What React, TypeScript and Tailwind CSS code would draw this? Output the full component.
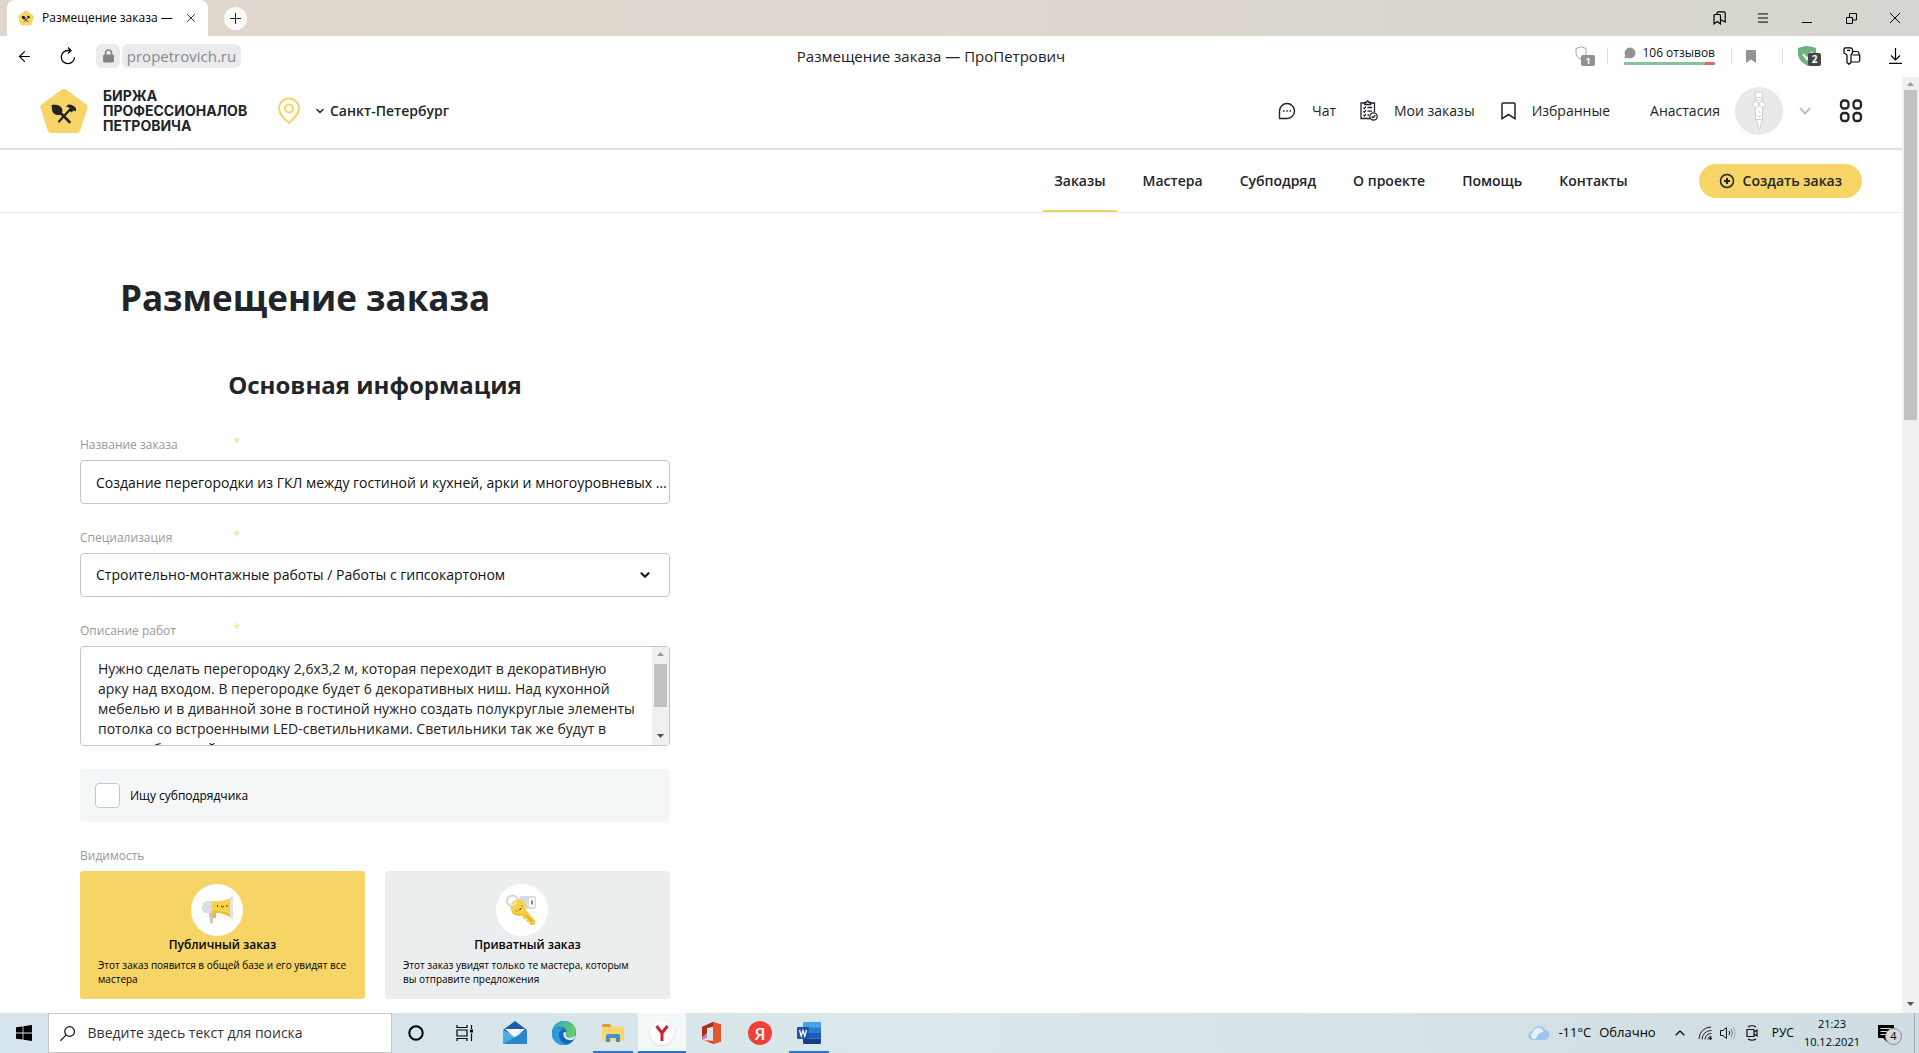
import { useState } from "react";
import type { ReactNode } from "react";
import { ArrowLeft, ChevronDown, ChevronUp, Menu, MessageCircle, X } from "lucide-react";

const NAV_ITEMS = ["Заказы", "Мастера", "Субподряд", "О проекте", "Помощь", "Контакты"];

const SPECIALIZATIONS = ["Строительно-монтажные работы / Работы с гипсокартоном"];

const DESCRIPTION =
  "Нужно сделать перегородку 2,6х3,2 м, которая переходит в декоративную арку над входом. В перегородке будет 6 декоративных ниш. Над кухонной мебелью и в диванной зоне в гостиной нужно создать полукруглые элементы потолка со встроенными LED-светильниками. Светильники так же будут в проеме большой комнаты.";

export default function App() {
  return (
    <div className="flex h-screen flex-col overflow-hidden bg-white font-['Open_Sans','Noto_Sans',sans-serif] text-[#212529]">
      <TitleBar />
      <Toolbar />
      <div className="flex min-h-0 flex-1">
        <div className="min-w-0 flex-1 overflow-hidden">
          <SiteHeader />
          <SiteNav />
          <OrderForm />
        </div>
        <ScrollBar thumbClass="mt-1 h-[330px]" />
      </div>
      <Taskbar />
    </div>
  );
}

function TitleBar() {
  return (
    <div className="flex h-9 shrink-0 items-center bg-linear-to-r from-[#e0d6cc] via-[#dfd7d0] to-[#d5d6cf] pr-0.5">
      <div className="ml-[7px] flex h-full w-[201px] items-center rounded-t-lg bg-white pr-2.5 pl-[11px]">
        <LogoMark className="h-4 w-4" />
        <span className="ml-2 flex-1 overflow-hidden text-xs whitespace-nowrap text-black">Размещение заказа —</span>
        <button aria-label="Закрыть вкладку">
          <X size={14} strokeWidth={1.7} className="text-[#333]" />
        </button>
      </div>
      <button
        aria-label="Новая вкладка"
        className="ml-4 flex h-[23px] w-[23px] items-center justify-center rounded-full bg-[#faf9f7]"
      >
        <svg width="11" height="11" viewBox="0 0 11 11" stroke="#222" fill="none">
          <path d="M5.5 0v11M0 5.5h11" />
        </svg>
      </button>
      <div className="ml-auto flex h-full text-black">
        <WindowButton label="Закладки">
          <svg width="13" height="14" viewBox="0 0 13 14" fill="none" stroke="currentColor" strokeWidth="1.2">
            <path d="M1 4.5a1 1 0 0 1 1-1h4.500a1 1 0 0 1 1 1v8.500L4.300 10.500 1 13z" />
            <path d="M4 3.200V2a1.200 1.200 0 0 1 1.200-1.200H11A1.200 1.200 0 0 1 12.200 2v9L8 8.700" />
          </svg>
        </WindowButton>
        <WindowButton label="Меню">
          <Menu size={14} strokeWidth={1.7} />
        </WindowButton>
        <WindowButton label="Свернуть">
          <svg width="10" height="10" viewBox="0 0 10 10" stroke="currentColor">
            <path d="M0 9.500h10" />
          </svg>
        </WindowButton>
        <WindowButton label="Развернуть">
          <svg width="11" height="11" viewBox="0 0 11 11" fill="none" stroke="currentColor">
            <path d="M.5 4.500h6v6h-6zM3.500 4.500v-4h7v6.500h-4" />
          </svg>
        </WindowButton>
        <WindowButton label="Закрыть">
          <svg width="10" height="10" viewBox="0 0 10 10" stroke="currentColor">
            <path d="M0 0l10 10M10 0L0 10" />
          </svg>
        </WindowButton>
      </div>
    </div>
  );
}

function WindowButton({ label, children }: { label: string; children: ReactNode }) {
  return (
    <button aria-label={label} className="flex w-11 items-center justify-center">
      {children}
    </button>
  );
}

function Toolbar() {
  return (
    <div className="flex h-[41px] shrink-0 items-center px-4 pb-px text-black">
      <button aria-label="Назад">
        <ArrowLeft size={17} strokeWidth={1.5} />
      </button>
      <button aria-label="Обновить" className="ml-[26px]">
        <svg width="18" height="18" viewBox="0 0 18 18" fill="none" stroke="currentColor" strokeWidth="1.3">
          <path d="M11.500 3.500H8.700a6.600 6.600 0 1 0 6.800 6.700M9 .5l3 3-3 3" />
        </svg>
      </button>
      <span className="ml-[19px] flex h-6 w-6 items-center justify-center rounded-md bg-[#ebebed]">
        <svg width="11" height="14" viewBox="0 0 11 14" fill="none">
          <rect y="5.500" width="11" height="8" rx="1.500" fill="#858588" />
          <path d="M2.500 6V4a3 3 0 0 1 6 0v2" stroke="#858588" strokeWidth="1.600" />
        </svg>
      </span>
      <span className="ml-0.5 flex h-6 w-[119px] items-center justify-center rounded-md bg-[#ebebed] text-[15px] text-[#88888b]">
        propetrovich.ru
      </span>
      <div className="flex-1 pl-[46px] text-center text-[15px] text-[#222]">Размещение заказа — ПроПетрович</div>
      <div className="flex items-center pr-px">
        <span className="relative h-5 w-5">
          <svg width="12" height="14" viewBox="0 0 12 14" fill="none" stroke="#a5a5a5">
            <path d="M6 .7l5 1.800v4C11 10 9 12 6 13.300 3 12 1 10 1 6.500v-4z" />
          </svg>
          <span className="absolute right-0 bottom-0 flex h-[11px] w-[14px] items-center justify-center rounded-xs bg-[#919191] text-[9px] font-bold text-white">
            1
          </span>
        </span>
        <Divider className="ml-3" />
        <span className="mb-1 ml-4 w-[91px]">
          <span className="flex h-[18px] items-center justify-between text-xs text-[#111]">
            <MessageCircle size={12} className="fill-[#919191] text-[#919191]" />
            106 отзывов
          </span>
          <span className="flex h-[3px] overflow-hidden rounded-full bg-[#e0695f]">
            <span className="w-[81px] bg-[#87c29a]" />
          </span>
        </span>
        <Divider className="ml-4" />
        <svg className="ml-3.5" width="10" height="13" viewBox="0 0 10 13" fill="#949494">
          <path d="M0 1a1 1 0 0 1 1-1h8a1 1 0 0 1 1 1v12L5 9.500 0 13z" />
        </svg>
        <Divider className="ml-[26px]" />
        <span className="relative ml-[15px] h-5 w-[23px]">
          <svg width="18" height="20" viewBox="0 0 18 20">
            <path d="M9 0c3 0 6 1 9 2v6c0 6-4 10-8 12C4 17 0 13 0 7V2c3-1 6-2 9-2z" fill="#6cb37f" />
            <path d="M5 8l4 5 5-7" stroke="#fff" strokeWidth="2" fill="none" />
          </svg>
          <span className="absolute right-0 bottom-0 flex h-[13px] w-[13px] items-center justify-center rounded-xs bg-[#454548] text-[10px] font-bold text-white">
            2
          </span>
        </span>
        <button aria-label="Пароли" className="ml-[22px]">
          <svg width="18" height="18" viewBox="0 0 18 18" fill="none" stroke="currentColor" strokeWidth="1.2">
            <path d="M2 .8h6L9.500 2.300V6L8 7.800V15.500l-2 1.800-2-1.800V8L1 6V2zM4 3.300h3" />
            <path d="M9.500 4.500h4.500a2 2 0 0 1 2 2v1.500M9.500 8h7.200v5.500a1.500 1.500 0 0 1-1.500 1.500H8" />
          </svg>
        </button>
        <button aria-label="Загрузки" className="ml-7">
          <svg width="13" height="16" viewBox="0 0 13 16" fill="none" stroke="currentColor" strokeWidth="1.200">
            <path d="M6.500 0v12M2 7.500L6.500 12 11 7.500M0 15.300h13" />
          </svg>
        </button>
      </div>
    </div>
  );
}

function Divider({ className }: { className: string }) {
  return <span className={`h-4 w-px bg-[#dedede] ${className}`} />;
}

function SiteHeader() {
  return (
    <header className="flex h-[73px] items-center border-b-2 border-[#dfdfe1] pr-[39px] pb-1 pl-10 text-sm">
      <a href="#" className="flex items-center">
        <LogoMark className="h-12 w-12" />
        <span className="ml-[15px] w-[143px] font-['Inter','Open_Sans',sans-serif] text-sm leading-[15px] font-bold">
          БИРЖА
          <br />
          ПРОФЕССИОНАЛОВ
          <br />
          ПЕТРОВИЧА
        </span>
      </a>
      <svg className="ml-[31px]" width="24" height="28" viewBox="0 0 24 28" fill="none" stroke="#f6d465" strokeWidth="2">
        <path d="M12 26C7.500 22 2 17.500 2 11.500a10 10 0 0 1 20 0C22 17.500 16.500 22 12 26z" />
        <circle cx="12" cy="11.500" r="4" />
      </svg>
      <button className="ml-[13px] flex items-center gap-1 font-semibold">
        <ChevronDown size={12} strokeWidth={3} />
        Санкт-Петербург
      </button>

      <div className="ml-auto flex items-center">
        <a href="#" className="flex items-center gap-4">
          <svg width="18" height="18" viewBox="0 0 18 18" fill="none" stroke="currentColor" strokeWidth="1.400">
            <path d="M1.500 16.500V9A7.500 7.500 0 1 1 9 16.500z" strokeLinejoin="round" />
            <path d="M5 9h1.500M8.300 9h1.500M11.500 9H13" strokeWidth="1.500" />
          </svg>
          Чат
        </a>
        <a href="#" className="ml-6 flex items-center gap-4">
          <svg width="18" height="21" viewBox="0 0 18 21" fill="none" stroke="currentColor" strokeWidth="1.300">
            <path d="M5 3H1v15.500h10M10 3h4.500v9" />
            <path d="M4.700 4.500V2.500h1.500L7.700.8l1.500 1.700h1.500v2z" />
            <path d="M3.500 7.500l1 1 1.300-2M7.500 7.500h4.500M3.500 11.200l1 1 1.300-2M7.500 11.200H12M3.500 15l1 1 1.300-2M7.500 15H9" />
            <circle cx="13.500" cy="16.500" r="3.700" fill="#fff" />
            <path d="M11.800 16.500l1.200 1.200 2.300-2.400" />
          </svg>
          Мои заказы
        </a>
        <a href="#" className="ml-[26px] flex items-center gap-4">
          <svg width="15" height="18" viewBox="0 0 15 18" fill="none" stroke="currentColor" strokeWidth="1.500">
            <path d="M1 2a1 1 0 0 1 1-1h11a1 1 0 0 1 1 1v14.700L7.500 12.500 1 16.700z" />
          </svg>
          Избранные
        </a>
        <button className="ml-10 flex items-center">
          Анастасия
          <span className="ml-[15px] flex h-12 w-12 items-center justify-center rounded-full bg-[#e8e9eb]">
            <svg width="14" height="40" viewBox="0 0 14 40" fill="#fff" stroke="#c4c5c9" strokeWidth=".8">
              <path d="M3.500 3A2 2 0 0 1 5.500 1h3a2 2 0 0 1 2 2v25L9 33l-1 5-1 1-1-6-2.500-5z" />
              <path d="M3.500 6.500h7M3.500 9h7M3.500 28.500h7M6 21h3M5.500 24.500l2 1.500 1.500-2" />
              <circle cx="3.800" cy="13.500" r="3" />
              <circle cx="10.200" cy="13.500" r="3" />
            </svg>
          </span>
          <svg className="ml-4" width="12" height="8" viewBox="0 0 12 8" fill="none" stroke="#c0c0c2" strokeWidth="2">
            <path d="M1 1l5 5.500L11 1" />
          </svg>
        </button>
        <button aria-label="Сервисы" className="ml-7">
          <svg width="24" height="24" viewBox="0 0 24 24" fill="none" stroke="currentColor" strokeWidth="2.300">
            <rect x="2" y="1.500" width="7.500" height="8" rx="3" />
            <rect x="14.500" y="1.500" width="7.500" height="8" rx="3" />
            <rect x="2" y="14" width="7.500" height="8" rx="3" />
            <rect x="14.500" y="14" width="7.500" height="8" rx="3" />
          </svg>
        </button>
      </div>
    </header>
  );
}

function SiteNav() {
  return (
    <nav className="flex h-[63px] items-center justify-end border-b border-[#ececee] pr-10 text-sm font-semibold">
      <div className="flex h-full gap-[15px]">
        {NAV_ITEMS.map((item, i) => (
          <a
            key={item}
            href="#"
            className={`flex h-full items-center border-y-2 border-t-transparent px-[11px] ${
              i === 0 ? "border-b-[#f0d264]" : "border-b-transparent"
            }`}
          >
            {item}
          </a>
        ))}
      </div>
      <button className="ml-[60px] flex h-[34px] items-center gap-2 rounded-full bg-[#f6d465] px-5 font-semibold">
        <svg width="16" height="16" viewBox="0 0 16 16" fill="none" stroke="currentColor" strokeWidth="1.500">
          <circle cx="8" cy="8" r="6.500" />
          <path d="M8 5v6M5 8h6" strokeWidth="2" />
        </svg>
        Создать заказ
      </button>
    </nav>
  );
}

function OrderForm() {
  const [title, setTitle] = useState(
    "Создание перегородки из ГКЛ между гостиной и кухней, арки и многоуровневых потолков"
  );
  const [description, setDescription] = useState(DESCRIPTION);
  const [subcontract, setSubcontract] = useState(false);
  const [visibility, setVisibility] = useState("public");

  return (
    <main className="px-20 pt-[61px]">
      <h1 className="ml-10 text-[35px] leading-[48px] font-bold">Размещение заказа</h1>
      <form className="mt-[47px] w-[590px]">
        <h2 className="text-center text-2xl leading-8 font-bold">Основная информация</h2>

        <div className="mt-[34px]">
          <FieldLabel htmlFor="title" required>
            Название заказа
          </FieldLabel>
          <input
            id="title"
            value={title}
            onChange={(e) => setTitle(e.target.value)}
            className="h-11 w-full rounded-sm border border-[#c3c7c9] pr-0.5 pl-[15px] text-sm text-ellipsis text-[#111]"
          />
        </div>

        <div className="mt-6">
          <FieldLabel htmlFor="specialization" required>
            Специализация
          </FieldLabel>
          <div className="relative">
            <select
              id="specialization"
              className="h-11 w-full appearance-none rounded-sm border border-[#c3c7c9] bg-white px-[15px] text-sm text-[#111]"
            >
              {SPECIALIZATIONS.map((name) => (
                <option key={name}>{name}</option>
              ))}
            </select>
            <ChevronDown size={14} strokeWidth={4} className="pointer-events-none absolute top-[15px] right-[18px]" />
          </div>
        </div>

        <div className="mt-6">
          <FieldLabel htmlFor="description" required>
            Описание работ
          </FieldLabel>
          <div className="flex h-[100px] overflow-hidden rounded-sm border border-[#c3c7c9]">
            <textarea
              id="description"
              value={description}
              onChange={(e) => setDescription(e.target.value)}
              className="h-full flex-1 resize-none overflow-hidden pt-3 pr-3 pl-[17px] text-sm leading-5 text-[#222]"
            />
            <ScrollBar thumbClass="mt-2 h-[43px]" />
          </div>
        </div>

        <label className="mt-[23px] flex h-[53px] items-center rounded-sm bg-[#f4f7f8] pl-[15px] text-xs font-medium text-black">
          <input
            type="checkbox"
            checked={subcontract}
            onChange={(e) => setSubcontract(e.target.checked)}
            className="mr-2.5 h-[25px] w-[25px] appearance-none rounded-sm border border-[#c3c7cc] bg-white checked:bg-[#f6d465]"
          />
          Ищу субподрядчика
        </label>

        <fieldset className="mt-6">
          <legend className="mb-[5px] text-xs leading-5 text-[#999]">Видимость</legend>
          <div className="grid grid-cols-2 gap-5">
            <VisibilityCard
              title="Публичный заказ"
              text="Этот заказ появится в общей базе и его увидят все мастера"
              checked={visibility === "public"}
              onSelect={() => setVisibility("public")}
              icon={<MegaphoneIcon />}
            />
            <VisibilityCard
              title="Приватный заказ"
              text={"Этот заказ увидят только те мастера, которым вы\u00a0отправите предложения"}
              checked={visibility === "private"}
              onSelect={() => setVisibility("private")}
              icon={<KeyIcon />}
            />
          </div>
        </fieldset>
      </form>
    </main>
  );
}

interface FieldLabelProps {
  htmlFor: string;
  required?: boolean;
  children: ReactNode;
}

function FieldLabel({ htmlFor, required, children }: FieldLabelProps) {
  return (
    <label htmlFor={htmlFor} className="mb-[5px] flex w-40 justify-between text-xs leading-5 text-[#999]">
      {children}
      {required && <span className="leading-4 text-[#f8da7a]">*</span>}
    </label>
  );
}

interface VisibilityCardProps {
  title: string;
  text: string;
  checked: boolean;
  onSelect: () => void;
  icon: ReactNode;
}

function VisibilityCard({ title, text, checked, onSelect, icon }: VisibilityCardProps) {
  return (
    <label
      className={`flex flex-col items-center rounded-[3px] px-[18px] py-[13px] text-black ${
        checked ? "bg-[#f6d465]" : "bg-[#eaeeef]"
      }`}
    >
      <input type="radio" name="visibility" checked={checked} onChange={onSelect} className="sr-only" />
      <span className="mr-3 flex h-[52px] w-[52px] items-center justify-center rounded-full bg-white">{icon}</span>
      <span className="text-xs leading-[18px] font-semibold">{title}</span>
      <span className="mt-1 w-full text-[10px] leading-[14px]">{text}</span>
    </label>
  );
}

function MegaphoneIcon() {
  return (
    <svg width="34" height="30" viewBox="0 0 34 30">
      <path d="M8 17h5v10a1.500 1.500 0 0 1-3 0l-1-9z" fill="#c6c5d3" />
      <path d="M12 17h4v6h-3z" fill="#e9bb35" />
      <path d="M12 6H7a6 6 0 0 0-5 7c0 3 2 5 5 5h5z" fill="#dcdde3" />
      <path d="M12 6c8 1 14-1 18-3v19c-5-3-11-5-18-4z" fill="#f8d14a" />
      <path d="M12 15.500c8 0 14 1.500 18 3.500v3c-5-3-11-5-18-4z" fill="#edbd30" />
      <path d="M30 2l3-1v23l-3-1z" fill="#e1e2e8" />
      <path d="M17.500 10v2M27 10v2M21 11q1.500 2 3 0" stroke="#4b4225" fill="none" />
    </svg>
  );
}

function KeyIcon() {
  return (
    <svg width="34" height="34" viewBox="0 0 34 34">
      <path d="M15 3h14a2 2 0 0 1 2 2v9a2 2 0 0 1-2 2H16l-4-6z" fill="#d9dae0" />
      <rect x="24" y="5" width="5.500" height="9" rx="1" fill="#fff" />
      <path d="M27 7.500v4" stroke="#444" strokeWidth="1.300" />
      <circle cx="7.500" cy="8" r="5.500" fill="none" stroke="#d3d4da" strokeWidth="1.800" />
      <path d="M16 20l4-4 10 11.500v4.500h-4l-2-1 .5-2-3 0 .5-3-3 .5z" fill="#f4c93f" />
      <circle cx="13.500" cy="14.500" r="8" fill="#f8d14a" />
      <path d="M6.500 18.500a8 8 0 0 0 13 1.500c-5 1.500-9 1-13-1.500z" fill="#ecbb2c" />
      <path d="M5 11q4 2.500 6-2" stroke="#e5e5ea" strokeWidth="2" fill="none" />
      <path d="M11 17.500l1 1M16.500 12.500l1 1M14 17q2 0 2-2" stroke="#4b4225" fill="none" />
      <path d="M21 22l6 6.500" stroke="#e0a91f" strokeWidth="1.200" />
    </svg>
  );
}

function LogoMark({ className }: { className: string }) {
  return (
    <svg className={className} viewBox="0 0 48 48">
      <path
        d="M22 2.500q2-1.500 4 0l20.500 15q1.700 1.300 1 3.500l-7.500 23q-.7 2-3 2H11q-2.300 0-3-2L.5 21q-.7-2.200 1-3.500z"
        fill="#f6d465"
      />
      <path d="M11.500 18c5-1 9 0 10.500 3.500 1 2 0 4-.5 5l-1.500 1.500c-5 .5-8-2-8-6z" fill="#222" />
      <path d="M20.500 26l9 9" stroke="#222" strokeWidth="2.600" strokeLinecap="round" />
      <path d="M19 34.500l11-12" stroke="#222" strokeWidth="2.200" strokeLinecap="round" />
      <path d="M26 19.500l2.500-2q5 0 7.500 4v3l-2.500-1-2 2-2.500-2.500 1-2z" fill="#222" />
    </svg>
  );
}

function ScrollBar({ thumbClass }: { thumbClass: string }) {
  return (
    <div className="flex w-[17px] shrink-0 flex-col items-center bg-[#f0f0f1]">
      <svg className="mt-[5px]" width="7" height="4" viewBox="0 0 7 4" fill="#9a9a9a">
        <path d="M3.500 0L7 4H0z" />
      </svg>
      <div className={`w-[13px] bg-[#c0c1c2] ${thumbClass}`} />
      <svg className="mt-auto mb-[7px]" width="7" height="4" viewBox="0 0 7 4" fill="#505050">
        <path d="M3.500 4L0 0h7z" />
      </svg>
    </div>
  );
}

function Taskbar() {
  return (
    <footer className="flex h-10 shrink-0 items-stretch bg-linear-to-r from-[#d6e4ec] via-[#d9e7ea] to-[#cfdde2] text-black">
      <button aria-label="Пуск" className="flex w-12 items-center justify-center">
        <svg width="16" height="16" viewBox="0 0 16 16" fill="#000">
          <path d="M0 2.300L6.600 1.400v6.200H0zM7.400 1.300L16 0v7.600H7.400zM0 8.400h6.600v6.200L0 13.700zM7.400 8.400H16V16l-8.600-1.300z" />
        </svg>
      </button>
      <label className="flex w-[344px] items-center border border-[#c5c8ca] bg-white pl-[11px]">
        <svg width="17" height="17" viewBox="0 0 17 17" fill="none" stroke="#111" strokeWidth="1.300">
          <circle cx="10.500" cy="6.300" r="5.300" />
          <path d="M6.500 10.300L.5 16.400" />
        </svg>
        <input
          aria-label="Поиск"
          placeholder="Введите здесь текст для поиска"
          className="ml-3 w-full text-sm placeholder:text-[#333]"
        />
      </label>

      <TaskButton label="Кортана">
        <svg width="16" height="16" viewBox="0 0 16 16" fill="none" stroke="#000" strokeWidth="2">
          <circle cx="8" cy="8" r="6.700" />
        </svg>
      </TaskButton>
      <TaskButton label="Представление задач">
        <svg width="17" height="16" viewBox="0 0 17 16" fill="none" stroke="#000" strokeWidth="1.200">
          <path d="M1 0v2.500h10V0M1 16v-2.500h10V16M1 5h10v6H1zM15.500 0v4M15.500 8.500V16" />
          <path d="M14 4.500h3v3h-3z" fill="#000" stroke="none" />
        </svg>
      </TaskButton>
      <div className="ml-[3px] flex gap-px">
        <TaskButton label="Почта">
          <svg width="24" height="24" viewBox="0 0 24 24">
            <path d="M0 9L12 0l12 9-12 7z" fill="#1b5da8" />
            <path d="M2 8h20l-10 9z" fill="#f5f9fc" />
            <path d="M0 9l12 7.500L24 9v14H0z" fill="#47b0ea" />
            <path d="M0 23l12-7L24 9v14z" fill="#2a86cf" />
          </svg>
        </TaskButton>
        <TaskButton label="Edge">
          <svg width="24" height="24" viewBox="0 0 24 24">
            <defs>
              <linearGradient id="edge-top" x1="0" y1="0" x2="1" y2=".5">
                <stop offset="0" stopColor="#2aa4df" />
                <stop offset="1" stopColor="#66cf62" />
              </linearGradient>
            </defs>
            <circle cx="12" cy="12" r="12" fill="#1667b7" />
            <path d="M0 11C1 4 6 0 12 0c7 0 12 5 12 10 0 4-3 6-6 6-3 0-5-1-4-3 2-4-2-7-6-7-4 0-7 2-8 5z" fill="url(#edge-top)" />
            <path d="M8 10c-3 6 1 12 7 13.500C6 26-1 19 0 11c2-5 8-6 12-2-2-1-3 0-4 1z" fill="#3299dc" />
            <path d="M14 13c-1 2 1 3.500 4 3.500 2 0 4-1 5.500-3 0 2-1 4-2 5-5 2-11-1-10-6 0-2 3-2 2.500.5z" fill="#dce9ef" />
          </svg>
        </TaskButton>
        <TaskButton label="Проводник" state="open">
          <svg width="22" height="20" viewBox="0 0 22 20">
            <path d="M0 2a1 1 0 0 1 1-1h7l2 3H0z" fill="#dba02c" />
            <path d="M0 5l10-1.500h11a1 1 0 0 1 1 1V18H0z" fill="#f9d66b" />
            <path d="M4 19v-6a2 2 0 0 1 2-2h10a2 2 0 0 1 2 2v6h-4v-4H8v4z" fill="#4590cf" />
          </svg>
        </TaskButton>
        <TaskButton label="Яндекс Браузер" state="active">
          <span className="flex h-6 w-6 items-center justify-center rounded-full bg-white shadow">
            <svg width="14" height="16" viewBox="0 0 14 16" fill="none" stroke="#c8242b" strokeWidth="3">
              <path d="M1.500 1L7 8l5.500-7M7 7.500V16" />
            </svg>
          </span>
        </TaskButton>
        <TaskButton label="Office">
          <svg width="20" height="22" viewBox="0 0 20 22">
            <path d="M12 0l8 2.500v17L12 22 3 18l9 1V4.500L6 6v9l-4 2.500L1 16V5z" fill="#d8401f" />
            <path d="M12 0L1 5v11l1 1.500L6 15V6l6-1.500z" fill="#a5301d" />
            <path d="M1 15l1 2.500L6 15v-4z" fill="#d77fc5" />
            <path d="M12 0l8 2.500v17L12 22z" fill="#e8572b" />
          </svg>
        </TaskButton>
        <TaskButton label="Яндекс">
          <span className="flex h-6 w-6 items-center justify-center rounded-full bg-[#ee4138] text-[17px] leading-none font-semibold text-white">
            Я
          </span>
        </TaskButton>
        <TaskButton label="Word" state="open">
          <svg width="24" height="22" viewBox="0 0 24 22">
            <path d="M6 1a1 1 0 0 1 1-1h17v6H6z" fill="#43a3e8" />
            <path d="M6 5.500h18V11H6z" fill="#2c7ad2" />
            <path d="M6 11h18v5.500H6z" fill="#1e5ab8" />
            <path d="M6 16.500h18V21a1 1 0 0 1-1 1H7a1 1 0 0 1-1-1z" fill="#173f88" />
            <rect y="5" width="12" height="12" rx="1" fill="#1c54ae" />
            <path d="M2.500 8l1.700 6L6 8.500 7.800 14l1.700-6" stroke="#fff" strokeWidth="1.300" fill="none" />
          </svg>
        </TaskButton>
      </div>

      <div className="ml-auto flex items-center">
        <svg width="22" height="16" viewBox="0 0 22 16">
          <path d="M5 15a4.500 4.500 0 0 1-.5-9A7 7 0 0 1 17 4.500a5.300 5.300 0 0 1-.5 10.500z" fill="#9cc6ee" />
          <path d="M5 14a4 4 0 0 1 0-7c1-3 4-5 7-4 2 0 3 2 3.500 4-5 0-6 4-8 7z" fill="#e3f1fd" />
        </svg>
        <span className="ml-2 text-[13px]">-11°C</span>
        <span className="ml-2 text-[13px]">Облачно</span>
        <ChevronUp size={16} strokeWidth={1.700} className="ml-4" />
        <svg className="ml-2.5" width="14" height="14" viewBox="0 0 14 14" fill="none" stroke="#222">
          <path d="M1 13A12 12 0 0 1 13 1M4 13.500A9 9 0 0 1 13.500 4.500M7 13.500A6 6 0 0 1 13.500 7.500M10 13.500a3 3 0 0 1 3.500-3" />
          <circle cx="12.500" cy="12.500" r="1" fill="#222" />
        </svg>
        <svg className="ml-2" width="16" height="14" viewBox="0 0 16 14" fill="none" stroke="#111">
          <path d="M.5 4.500h2.500L6.500 1.500v11L3 9.500H.5z" />
          <path d="M9 5q1.500 2 0 4" />
          <path d="M11 3q3 4 0 8" stroke="#777" />
          <path d="M13 1q4.500 6 0 12" stroke="#a5adb0" />
        </svg>
        <svg className="ml-2.5" width="12" height="16" viewBox="0 0 12 16" fill="none" stroke="#111" strokeWidth="1.200">
          <path d="M1 4.500h7v7H1zM8 7l3-2v6L8 9M2 2q4-2.500 8 0M2 14q4 2.500 8 0" />
        </svg>
        <span className="ml-3.5 text-xs">РУС</span>
        <div className="ml-2.5 text-center text-[11px] leading-[18px]">
          21:23
          <br />
          10.12.2021
        </div>
        <button aria-label="Уведомления" className="relative ml-[18px] h-6 w-6">
          <svg width="16" height="17" viewBox="0 0 16 17">
            <path d="M0 0h16v13h-7v4l-4-4H0z" fill="#000" />
            <path d="M2.500 3.500h11M2.500 6.500h11M2.500 9.500h8" stroke="#d5e1e5" />
          </svg>
          <span className="absolute right-0 bottom-0 flex h-[17px] w-[17px] items-center justify-center rounded-full border border-[#888] bg-[#d2dce0] text-[11px]">
            4
          </span>
        </button>
        <span className="ml-3 h-full w-[5px] border-l border-[#9fafb8]" />
      </div>
    </footer>
  );
}

interface TaskButtonProps {
  label: string;
  state?: "open" | "active";
  children: ReactNode;
}

function TaskButton({ label, state, children }: TaskButtonProps) {
  return (
    <button
      aria-label={label}
      className={`relative flex w-12 items-center justify-center ${state === "active" ? "bg-[#f3f8f9]" : ""}`}
    >
      {children}
      {state && (
        <span
          className={`absolute bottom-0 h-0.5 bg-[#2e74cf] ${state === "active" ? "inset-x-0" : "inset-x-1"}`}
        />
      )}
    </button>
  );
}
